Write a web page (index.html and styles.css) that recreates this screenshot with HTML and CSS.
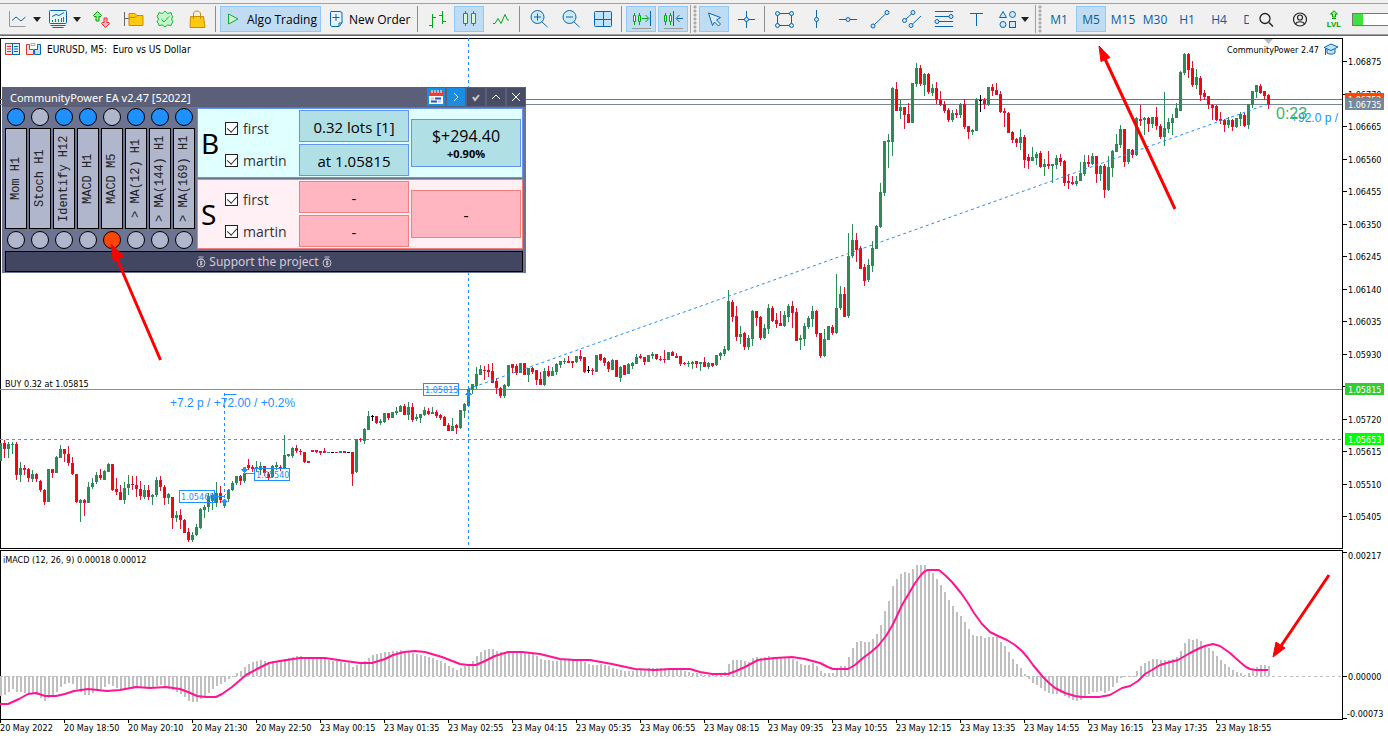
FILE: index.html
```html
<!DOCTYPE html>
<html lang="en">
<head>
<meta charset="utf-8">
<meta name="viewport" content="width=device-width, initial-scale=1">
<title>EURUSD, M5</title>
<link rel="stylesheet" href="styles.css">
</head>
<body>
<header class="toolbar">
  <div class="tools">
    <button class="drop" aria-label="Chart type"><svg class="b" width="20" height="24"><path class="gray" d="M1.5 4v15.500h16"/><path d="M4 13.500l4-3.500 5 4 4.500-4"/></svg><i class="caret"></i></button>
    <button class="drop second" aria-label="Indicators"><svg class="b" width="20" height="24"><rect x="1.500" y="3.500" width="17" height="13" rx="1" fill="#e6f4ff"/><path d="M2.500 18.500h15M4.500 20.500h11M4 9.500l4-2 3 1 5-3"/><path class="g" d="M4.500 15v-2M7.500 15v-3M10.500 15v-3M13.500 15v-4M15.500 15v-5"/></svg><i class="caret"></i></button>
    <button class="tool first" aria-label="Depth"><svg width="24" height="24"><path d="M8.500 4.500L12.500 8.500 11 10 10 9v5H7V9l-1 1-1.500-1.500z" fill="#9df29d" stroke="#00a000"/><path d="M16.500 20.500l-4-4L14 15l1 1v-5h3v5l1-1 1.500 1.500z" fill="#ffb3b3" stroke="#dd3333"/></svg></button>
    <button class="tool" aria-label="Files"><svg width="24" height="24"><path d="M3.500 5v14M3.500 11.500H8" fill="none" stroke="#666"/><path d="M8 6.500h6l2 2h6v10H8z" fill="#ffc90e" stroke="#c98e00"/><path d="M8 10.500h6l2-2" fill="none" stroke="#c98e00"/></svg></button>
    <button class="tool" aria-label="Market"><svg width="24" height="24"><path d="M12 4l2.500 2.500L18 5.500l.8 3L20 9.500 18.500 12l1.500 3-1 1-1 2.500-3.500-.5L12 20l-2.500-2L6 18.500 5.200 16 4 15l1.500-3L4 9l1.200-1L6 5.500l3.500 1z" fill="#c4f7c9" stroke="#18b83a"/><path d="M8.500 12.500l2.500 2.500 5-5.500" fill="none" stroke="#18b83a"/></svg></button>
    <button class="tool" aria-label="Shop"><svg width="24" height="24"><path d="M5.500 9.500h13L20 20.500H5z" fill="#ffc90e" stroke="#c98e00"/><path d="M8.500 12V7c0-4 7-4 7 0v5" fill="none" stroke="#c98e00"/></svg></button>
    <span class="sep"></span>
    <button class="wide on algo"><svg width="14" height="24"><path d="M1.500 7L11 12 1.500 17z" fill="#d2f7d8" stroke="#11a836"/></svg>Algo Trading</button>
    <button class="wide order"><svg class="b" width="14" height="24"><path d="M2 4.500h9l2 1V16l-3 3.500H3l-1.500-1v-13z" fill="#e6f4ff"/><path d="M10 19.500V16h3M7 7v7M3.500 10.500h7"/></svg>New Order</button>
    <span class="sep"></span>
    <button class="tool" aria-label="Bars"><svg class="g" width="24" height="24"><path d="M7.500 7v14M4 18.500h3.500M7.500 10.500H11M17.500 4v13M14 8.500h3.500M17.500 14.500H21"/></svg></button>
    <button class="tool on" aria-label="Candles"><svg class="g" width="24" height="24"><path d="M8.500 4v15M16.500 4v15"/><path d="M6.500 6.500h4v10h-4zM14.500 6.500h4v10h-4z" fill="#d8f5d8"/></svg></button>
    <button class="tool" aria-label="Line"><svg class="g" width="24" height="24"><path d="M4 16.500h2l3-5 3 5 4-9 2.500 5.500H20"/></svg></button>
    <span class="sep"></span>
    <button class="tool" aria-label="Zoom in"><svg class="b" width="24" height="24"><circle cx="10.500" cy="10" r="6.500" fill="#cdeaff"/><path d="M7 10h7M10.500 6.500v7M15 15l5.500 5"/></svg></button>
    <button class="tool" aria-label="Zoom out"><svg class="b" width="24" height="24"><circle cx="10.500" cy="10" r="6.500" fill="#cdeaff"/><path d="M7 10h7M15 15l5.500 5"/></svg></button>
    <button class="tool" aria-label="Tile"><svg class="b" width="24" height="24"><rect x="3.500" y="4.500" width="17" height="15" rx="1" fill="#bfe4ff"/><path d="M12.500 4v16M3 12.500h18"/></svg></button>
    <span class="sep"></span>
    <button class="tool on" aria-label="Auto scroll"><svg class="g" width="24" height="24"><path d="M5.500 6v12M10.500 6v12M13 11.500h6M16.500 8l3.500 3.500-3.500 3.500"/><path d="M4.500 8.500h2v6h-2zM9.500 8.500h2v6h-2z" fill="#fff"/><path d="M21.500 4v15" stroke="#0b66b0"/><path class="gray" d="M3 21.500h19"/></svg></button>
    <button class="tool on" aria-label="Chart shift"><svg class="g" width="24" height="24"><path d="M4.500 6v12M9.500 6v12"/><path d="M3.500 8.500h2v6h-2zM8.500 8.500h2v6h-2z" fill="#fff"/><path d="M12.500 4v15M22 11.500h-6M18.500 8L15 11.500l3.500 3.500" stroke="#0b66b0"/><path class="gray" d="M3 21.500h19"/></svg></button>
    <span class="grip"></span>
    <button class="tool on" aria-label="Cursor"><svg class="b" width="24" height="24"><path d="M6.500 6l12 4.500-4 2.500 4 4-2 2-4-4-2 3.500z" fill="#d5ecff"/></svg></button>
    <button class="tool" aria-label="Crosshair"><svg class="b" width="24" height="24"><path d="M4 12.500h17M12.500 4v17"/><circle cx="12.500" cy="12.500" r="2" fill="#cdeaff"/></svg></button>
    <span class="sep"></span>
    <button class="tool" aria-label="Rectangle"><svg class="b" width="24" height="24"><rect x="5.500" y="6.500" width="14" height="12"/><g fill="#cdeaff"><circle cx="5.500" cy="6.500" r="2"/><circle cx="19.500" cy="6.500" r="2"/><circle cx="5.500" cy="18.500" r="2"/><circle cx="19.500" cy="18.500" r="2"/></g></svg></button>
    <button class="tool" aria-label="Vertical line"><svg class="b" width="24" height="24"><path d="M12.500 3v18"/><circle cx="12.500" cy="12.500" r="2" fill="#cdeaff"/></svg></button>
    <button class="tool" aria-label="Horizontal line"><svg class="b" width="24" height="24"><path d="M3 12.500h18"/><circle cx="12" cy="12.500" r="2" fill="#cdeaff"/></svg></button>
    <button class="tool" aria-label="Trendline"><svg class="b" width="24" height="24"><path d="M5 19L19 5.500"/><g fill="#cdeaff"><circle cx="5" cy="19" r="2"/><circle cx="19" cy="5.500" r="2"/></g></svg></button>
    <button class="tool" aria-label="Channel"><svg class="b" width="24" height="24"><path d="M4 14l9-8.500M10 19.500L21 9"/><g fill="#cdeaff"><circle cx="4.500" cy="13.500" r="2"/><circle cx="13" cy="5.500" r="2"/><circle cx="11" cy="18.500" r="2"/></g></svg></button>
    <button class="tool" aria-label="Fibonacci"><svg class="b" width="24" height="24"><path d="M3 4.500h18M3 9.500h18M3 14.500h18M3 19.500h18"/><g fill="#cdeaff"><circle cx="19" cy="9.500" r="2"/><circle cx="5" cy="14.500" r="2"/></g></svg></button>
    <button class="tool" aria-label="Text"><svg class="b" width="24" height="24"><path d="M6 6.500h13M12.500 6.500V19"/></svg></button>
    <button class="drop shapes" aria-label="Shapes"><svg class="b" width="24" height="24"><g fill="#cdeaff"><path d="M7 4.500l3.500 6h-7z"/><circle cx="16.500" cy="7.500" r="3"/><circle cx="7" cy="17.500" r="3"/><rect x="13.500" y="14.500" width="6" height="6"/></g></svg><i class="caret"></i></button>
    <span class="grip"></span>
    <button class="tool tf">M1</button>
    <button class="tool tf on">M5</button>
    <button class="tool tf">M15</button>
    <button class="tool tf">M30</button>
    <button class="tool tf">H1</button>
    <button class="tool tf">H4</button>
    <button class="tool tf">D1</button>
  </div>
  <div class="status">
    <button class="tool" aria-label="Search"><svg width="24" height="24" fill="none" stroke="#222" stroke-width="1.300"><circle cx="11" cy="11.500" r="5"/><path d="M15 15.500l4 4"/></svg></button>
    <button class="tool" aria-label="Account"><svg width="24" height="24" fill="none" stroke="#222" stroke-width="1.200"><circle cx="12" cy="12.500" r="6.500"/><circle cx="12" cy="10.500" r="2.500"/><path d="M7.500 17c1-3 8-3 9 0"/></svg></button>
    <button class="tool lvl"><svg width="12" height="10"><path d="M6 .8L9.500 4H7.500v3h-3V4h-2z" fill="#9df29d" stroke="#00a000"/><path d="M4 8.500h4" stroke="#00a000"/></svg>LVL</button>
    <span class="meter"></span>
  </div>
</header>

<main class="terminal">
  <section class="pane">
    <svg class="plot" id="price" aria-label="EURUSD price chart">
      <g transform="translate(0,-38)">
        <line class="ask" x1="0" x2="100%" y1="99.500" y2="99.500"/>
        <line class="bid" x1="0" x2="100%" y1="104.500" y2="104.500"/>
        <line class="open" x1="0" x2="100%" y1="389.500" y2="389.500"/>
        <line class="even" x1="0" x2="100%" y1="439.500" y2="439.500"/>
        <g id="candles" shape-rendering="crispEdges"></g>
        <g class="trade">
          <g stroke-dasharray="3 3">
            <path d="M468.500 38v520M224.500 393v106"/>
            <path d="M468 389L1268 104M224 496l20-23"/>
          </g>
          <path d="M224.500 394.500h12M215 496.500h9M244 473.500h10"/>
          <path fill="#1e90ff" d="M224.500 499l3 3h-2v2h-2v-2h-2zM244.500 472.500l3-3h-2v-2h-2v2h-2zM468.500 391.500l3 3h-2v2h-2v-2h-2z"/>
          <rect x="179.500" y="490.500" width="35" height="12"/>
          <rect x="254.500" y="468.500" width="35" height="12"/>
          <rect x="423.500" y="383.500" width="35" height="12"/>
        </g>
        <g class="tag"><text x="181" y="500">1.05460</text><text x="256" y="478">1.05540</text><text x="425" y="393">1.05815</text></g>
        <text class="gain" x="170" y="407">+7.2 p / +72.00 / +0.2%</text>
        <text class="gain" x="1291" y="122">+92.0 p /</text>
        <text class="timer" x="1276" y="119">0:23</text>
        <text class="note" x="5" y="387">BUY 0.32 at 1.05815</text>
        <path d="M1264 39h9l-4.500 5z" fill="#bbb"/>
      </g>
    </svg>
    <h1 class="symbol">
      <svg width="16" height="12"><rect x=".5" y=".5" width="7" height="11" fill="#ffe3e3" stroke="#d33"/><rect x="7.500" y=".5" width="7" height="11" fill="#dff0ff" stroke="#0b66b0"/><path d="M2 3.500h4M2 6h4M2 8.500h4" stroke="#d33"/><path d="M9 3.500h4M9 6h4M9 8.500h4" stroke="#0b66b0"/></svg>
      <svg width="16" height="12"><path d="M.5 1.500h3v5h4v5h-7z" fill="#ffe3e3" stroke="#d33"/><path d="M14.500 1.500h-3v5h-3v5h6z" fill="#bfe4ff" stroke="#0b66b0"/><path d="M5 .5h4v2H5z" fill="none" stroke="#aaa"/></svg>
      <span>EURUSD, M5:&nbsp; Euro vs US Dollar</span>
    </h1>
    <div class="expert">CommunityPower 2.47 <svg width="16" height="13"><path d="M4 6v4c2 1.500 6 1.500 8 0V6M2.500 5.500V12" fill="#bfe4ff" stroke="#0b66b0"/><path d="M8 1l7 3-7 3.500L1 4.500z" fill="#bfe4ff" stroke="#0b66b0"/></svg></div>
  </section>
  <svg class="axis" id="priceAxis"></svg>

  <section class="pane macd">
    <svg class="plot" aria-label="MACD indicator">
      <g transform="translate(0,-550)">
        <line class="zero" x1="0" x2="100%" y1="676.500" y2="676.500"/>
        <g id="bars" shape-rendering="crispEdges"></g>
        <polyline id="signal" class="signal"/>
        <text class="note" x="3" y="563">iMACD (12, 26, 9) 0.00018 0.00012</text>
      </g>
    </svg>
  </section>
  <svg class="axis"><path d="M0 3.500h4M0 127.500h4M0 169.500h4"/><text x="5" y="10">0.00217</text><text x="5" y="131">0.00000</text><text x="4" y="168">-0.00073</text></svg>
  <ol class="times" id="times"></ol>

  <section class="panel" aria-label="CommunityPower EA">
    <header class="panel-head">
      <h2>CommunityPower EA v2.47 [52022]</h2>
      <button class="blue" aria-label="Calendar"><svg class="calendar" width="14" height="15"><path d="M0 2h14v12H0z" fill="#fff"/><path d="M0 2h14v4H0z" fill="#e5403a"/><path d="M3 0v3M6 0v3M9 0v3M12 0v3" stroke="#fff"/><path d="M6 8.500h6M2 11.500h6" stroke="#2a50b8" stroke-width="2"/><path d="M2 8.500h3M9 11.500h3" stroke="#b9c2dd" stroke-width="2"/></svg></button>
      <button class="blue" aria-label="Expand"><svg class="mark" width="12" height="12"><path d="M4 2l4 4-4 4"/></svg></button>
      <button aria-label="Apply"><svg class="mark" width="12" height="12"><path d="M3 6l2 3 4-5" stroke="#ccc" stroke-width="2"/></svg></button>
      <button aria-label="Collapse"><svg class="mark" width="12" height="12"><path d="M2 8l4-4 4 4"/></svg></button>
      <button aria-label="Close"><svg class="mark" width="12" height="12"><path d="M2 2l8 8M10 2l-8 8"/></svg></button>
    </header>
    <div class="panel-body">
      <div class="signals">
        <div class="sig"><i class="dot up"></i><button>Mom H1</button><i class="dot"></i></div>
        <div class="sig"><i class="dot"></i><button>Stoch H1</button><i class="dot"></i></div>
        <div class="sig"><i class="dot up"></i><button>Identify H12</button><i class="dot"></i></div>
        <div class="sig"><i class="dot up"></i><button>MACD H1</button><i class="dot"></i></div>
        <div class="sig"><i class="dot"></i><button>MACD M5</button><i class="dot down"></i></div>
        <div class="sig"><i class="dot up"></i><button>&gt; MA(12) H1</button><i class="dot"></i></div>
        <div class="sig"><i class="dot up"></i><button>&gt; MA(144) H1</button><i class="dot"></i></div>
        <div class="sig"><i class="dot up"></i><button>&gt; MA(169) H1</button><i class="dot"></i></div>
      </div>
      <div class="sides">
        <div class="side buy">
          <b class="letter">B</b>
          <div class="checks"><label><input type="checkbox" checked>first</label><label><input type="checkbox" checked>martin</label></div>
          <div class="pair"><button>0.32 lots [1]</button><button>at 1.05815</button></div>
          <button class="total">$+294.40<small>+0.90%</small></button>
        </div>
        <div class="side sell">
          <b class="letter">S</b>
          <div class="checks"><label><input type="checkbox" checked>first</label><label><input type="checkbox" checked>martin</label></div>
          <div class="pair"><button>-</button><button>-</button></div>
          <button class="total">-</button>
        </div>
      </div>
    </div>
    <button class="support"><svg width="10" height="12"><circle cx="5" cy="7" r="4"/><path d="M2.500 1h5M3 3h4M6.500 5.500h-2v1.500h1.500v1.500h-2M5 4.500v5"/></svg>Support the project<svg width="10" height="12"><circle cx="5" cy="7" r="4"/><path d="M2.500 1h5M3 3h4M6.500 5.500h-2v1.500h1.500v1.500h-2M5 4.500v5"/></svg></button>
  </section>

  <svg class="arrows" aria-hidden="true">
    <g transform="translate(0,-38)">
      <path d="M160.500 360L117 259M1175 209L1105 59M1329 575L1281 646"/>
      <path class="head" d="M111 244l12.500 12-10 5zM1099 46l11 11.500-9 4zM1273 657l3-15 9 6z"/>
    </g>
  </svg>
</main>
<script src="chart.js"></script>
</body>
</html>
```

FILE: styles.css
```css
* { box-sizing: border-box; }
body {
  margin: 0;
  min-height: 100vh;
  display: flex;
  flex-direction: column;
  background: #fff;
  color: #000;
  font: 12px "Open Sans", "Noto Sans", sans-serif;
  overflow-x: hidden;
}
button {
  margin: 0;
  padding: 0;
  border: 1px solid transparent;
  background: none;
  color: inherit;
  font: inherit;
}
svg { display: block; flex: none; }

/* toolbar */
.toolbar {
  display: flex;
  height: 36px;
  padding-top: 3px;
  background: #f0f0f0;
  border-bottom: 1px solid #696969;
  box-shadow: inset 0 3px #f0f0f0, inset 0 4px #a0a0a0, inset 0 -1px #a0a0a0;
}
.tools {
  flex: 1;
  min-width: 0;
  display: flex;
  align-items: center;
  gap: 2px;
  padding-left: 8px;
  overflow: hidden;
}
.tools > * { flex: none; }
.tool {
  width: 30px;
  height: 26px;
  display: flex;
  align-items: center;
  justify-content: center;
}
.tool.first { margin-left: 3px; }
.on { background: #c0dcf3; border-color: #90c8f6; }
.drop { display: flex; align-items: center; gap: 5px; border: 0; }
.drop.second { margin-left: 5px; }
.drop.shapes { width: 40px; gap: 1px; padding-left: 3px; }
.caret { border: 4px solid transparent; border-top: 5px solid #222; border-bottom: 0; }
.sep { width: 1px; height: 26px; margin: 0 2px 0 1px; background: #8c8c8c; }
.grip {
  width: 7px;
  height: 28px;
  border-left: 1px solid #a0a0a0;
  background: radial-gradient(circle, #aaa 1px, transparent 2px) 2px 0 / 4px 4px repeat-y;
}
.wide { height: 26px; display: flex; align-items: center; }
.algo { width: 101px; padding-left: 6px; gap: 6px; }
.order { width: 91px; padding-left: 5px; gap: 6px; }
.b { fill: none; stroke: #0b66b0; }
.g { fill: none; stroke: #00a818; }
.gray { stroke: #999; }
.tf { color: #0b5c9e; }
.status { flex: none; display: flex; align-items: center; gap: 4px; padding-left: 2px; }
.lvl { flex-direction: column; color: #00a000; font: bold 8px "Liberation Sans", sans-serif; }
.meter {
  width: 36px;
  height: 13px;
  margin-left: -1px;
  border: 1px solid #777;
  border-right: 0;
  background: linear-gradient(90deg, #3fe03f 10px, #fff 10px);
}

/* chart window */
.terminal {
  position: relative;
  flex: 1;
  display: grid;
  grid-template-columns: 1fr 45px;
  grid-template-rows: minmax(511px, 1fr) 171px 19px;
  margin-top: 2px;
  overflow: hidden;
  font: 9px "DejaVu Sans Condensed", "DejaVu Sans", sans-serif;
}
.pane { position: relative; min-width: 0; border: 1px solid #000; border-width: 1px 1px 1px 0; box-shadow: inset 1px 0 #000; }
.pane.macd { margin-top: 1px; }
.plot { position: absolute; inset: -1px 0 0; width: 100%; height: calc(100% + 1px); }
.axis { width: 100%; height: 100%; }
.axis path { stroke: #000; }
.ask, .bid, .open, .even, .zero { shape-rendering: crispEdges; }
.ask { stroke: #ff4500; }
.bid { stroke: #778899; }
.open { stroke: #32cd32; }
.even { stroke: #00e600; stroke-dasharray: 3 3; }
.zero { stroke: #c0c0c0; stroke-dasharray: 3 3; }
.trade { fill: none; stroke: #1e90ff; }
.tag { fill: #1e90ff; }
.gain { fill: #1e90ff; font: 12px "Liberation Sans", sans-serif; }
.timer { fill: #3cb371; font: 16px "Liberation Sans", sans-serif; }
.signal { fill: none; stroke: #ff1493; stroke-width: 2; stroke-linejoin: round; }
.symbol {
  position: absolute;
  top: 4px;
  left: 5px;
  margin: 0;
  display: flex;
  align-items: center;
  gap: 5px;
  font: inherit;
  font-size: 10px;
}
.expert { position: absolute; top: 4px; right: 3px; display: flex; align-items: center; gap: 4px; }
.times {
  grid-column: 1 / -1;
  display: flex;
  margin: 0;
  padding: 0;
  list-style: none;
}
.times li { flex: none; width: 64px; white-space: nowrap; line-height: 11px; }
.times li::before { content: ""; display: block; width: 1px; height: 3px; background: #000; }

/* expert panel */
.panel {
  position: absolute;
  top: 49px;
  left: 2px;
  width: 524px;
  padding-bottom: 1px;
  background: #6c7492;
  font: 12px/16px "Open Sans", "Noto Sans", sans-serif;
}
.panel-head {
  display: flex;
  align-items: center;
  gap: 2px;
  height: 20px;
  padding: 0 1px 0 8px;
  background: #5b5f77;
  color: #fff;
}
.panel-head h2 { flex: 1; margin: 0; font: 11px "Noto Sans", sans-serif; }
.panel-head button {
  width: 18px;
  height: 18px;
  display: grid;
  place-items: center;
  border: 0;
  background: #484c66;
}
.panel-head button.blue { background: #1b8de0; }
.mark { fill: none; stroke: #fff; }
.panel-body { display: flex; gap: 2px; padding: 1px 3px 0; }
.signals { display: flex; gap: 2px; }
.sig { display: flex; flex-direction: column; align-items: center; justify-content: space-between; width: 22px; }
.dot { width: 18px; height: 18px; border: 1px solid #000; border-radius: 50%; background: #b0b6cb; }
.dot.up { background: #1e90ff; }
.dot.down { background: #ff4500; }
.sig button {
  width: 22px;
  height: 101px;
  border: 1px solid #000;
  background: #b0b6cb;
  color: #222;
  font: 12px/18px "Liberation Mono", monospace;
  writing-mode: vertical-rl;
  transform: rotate(180deg);
}
.sides { flex: 1; display: flex; flex-direction: column; gap: 1px; }
.side { display: flex; align-items: center; height: 70px; padding: 1px; border: 1px solid #6495ed; background: #e0ffff; font-size: 14px; }
.letter { width: 26px; padding-left: 2px; font: 28px/32px "Noto Sans", sans-serif; }
.checks { flex: 1; display: flex; flex-direction: column; gap: 16px; padding-top: 3px; color: #333; }
.checks label { display: flex; align-items: center; gap: 5px; }
.checks input { appearance: none; position: relative; width: 13px; height: 13px; margin: 0; border: 1px solid #222; background: #fff; }
.checks input:checked::after {
  content: "";
  position: absolute;
  top: 0;
  left: 3px;
  width: 5px;
  height: 8px;
  border: solid #333;
  border-width: 0 1px 1px 0;
  transform: rotate(42deg);
}
.pair { width: 110px; display: grid; gap: 2px; margin-right: 2px; }
.side button { border: 1px solid #6495ed; background: #b0e0e6; height: 32px; font-size: 15px; padding-top: 2px; }
.side .total { width: 110px; height: 48px; font-size: 16px; line-height: 19px; }
.total small { display: block; font: bold 11px/15px "Open Sans", sans-serif; }
.side.sell { border-color: #f08080; background: #fff0f5; }
.side.sell button { border-color: #f08080; background: #ffb6c1; }
.support {
  display: flex;
  align-items: center;
  justify-content: center;
  gap: 3px;
  width: 518px;
  height: 21px;
  margin: 2px 3px 0;
  border: 1px solid #000;
  background: #434660;
  color: #d3cdda;
  font-family: "Noto Sans", sans-serif;
}
.support svg { fill: none; stroke: #c5bfcc; }

.arrows { position: absolute; inset: 0; width: 100%; height: 100%; pointer-events: none; }
.arrows path { fill: none; stroke: #f00; stroke-width: 3; }
.arrows .head { fill: #f00; stroke-width: 1; }
```

FILE: chart.js
```js
const STEP = 4;
const svg = (name, attrs, parent, text) => {
  const el = document.createElementNS("http://www.w3.org/2000/svg", name);
  for (const k in attrs) el.setAttribute(k, attrs[k]);
  if (text) el.textContent = text;
  parent.appendChild(el);
  return el;
};

// direction (g up, r down, k flat), then high, body top, body bottom, low
const candles = `g443 443 461 461,r440 443 449 458,g442 444 449 458,g442 444 445 454,r442 444 475 480,g462 468 475 482,r465 468 470 475,r468 469 478 482,g470 474 479 482,r473 474 479 482,
r480 481 490 492,r489 490 502 505,g469 469 502 502,r469 469 473 478,g456 457 473 473,g445 449 458 458,r449 449 454 462,r446 454 463 466,r457 463 474 475,r474 474 502 503,
g499 500 503 522,r499 500 503 516,g482 487 503 503,g478 483 487 489,g472 475 482 484,r469 475 478 480,g470 471 480 480,g463 464 472 472,r464 464 490 491,r478 489 492 495,
r485 492 500 500,g482 488 500 504,g475 484 488 495,r476 484 485 490,r476 485 489 497,r481 489 496 500,g485 490 497 499,r485 490 497 500,g494 495 497 505,g477 480 495 497,
r476 480 487 491,r485 487 498 505,g493 494 498 504,r497 497 518 529,g511 515 518 522,r509 515 520 529,r519 520 533 533,r528 532 540 542,g532 535 540 542,g524 527 535 536,
g508 509 528 529,g505 507 510 518,g493 496 507 512,g493 495 501 510,g482 493 503 507,r486 493 500 503,g499 502 506 508,g489 490 499 502,g481 483 490 491,g476 476 483 485,
r475 476 481 485,g471 473 481 483,r459 465 468 470,r465 467 469 472,g461 467 469 472,g462 466 470 475,r466 466 473 476,r472 474 478 480,g465 466 477 478,g462 465 467 470,
r465 467 469 471,g435 455 469 469,g454 454 456 457,g447 448 456 458,r445 448 451 453,r449 451 452 455,r452 452 462 463,r461 461 463 463,r450 450 452 452,r450 450 452 453,
r451 451 453 455,r448 451 453 453,g452 452 453 453,k452 452 453 453,r452 452 453 453,g451 451 453 453,r451 451 453 453,k452 452 453 453,r452 452 474 486,g439 439 472 473,
r438 439 440 442,g428 429 441 444,g411 416 430 430,k415 416 417 421,r416 416 423 424,g419 421 423 425,g413 413 422 423,r413 413 418 420,g412 412 418 418,g407 411 413 415,
g405 406 412 412,r404 406 415 415,g402 407 415 420,r403 407 420 422,g414 417 419 421,g414 414 418 423,g407 410 415 416,r408 411 414 415,g407 412 414 414,r410 412 416 418,
r414 415 418 420,r416 417 426 426,r423 425 431 431,g418 426 431 431,r424 425 428 434,g410 410 428 429,g403 404 411 418,g389 389 406 406,g384 384 390 394,g367 374 386 389,
g365 369 375 375,r366 370 371 380,r364 370 372 377,r363 371 383 383,r378 381 388 394,r387 388 396 398,g384 385 396 398,g365 365 386 387,r364 364 368 373,r364 366 373 375,
g363 363 373 373,r363 363 375 375,g368 368 375 382,r367 368 372 374,r370 370 380 385,r372 379 385 385,g368 371 385 386,r366 371 376 377,g367 371 376 376,g363 364 372 375,
g361 361 365 368,g358 361 362 364,r356 361 363 363,r361 361 363 368,g356 356 362 363,r350 356 359 361,r357 357 372 373,k366 370 371 373,r368 370 371 375,g355 355 372 372,
r354 354 360 361,r357 358 363 366,r361 362 369 372,g359 360 370 370,r360 360 377 377,g366 367 378 382,r365 365 375 375,g363 364 374 374,g362 363 366 369,g354 357 364 364,
r354 356 358 359,r357 357 362 365,g355 355 362 362,g352 354 356 359,r354 354 359 360,r356 359 360 361,r350 359 360 363,g352 352 360 360,r351 352 356 356,r353 356 358 358,
r356 356 364 366,r362 363 364 365,g361 363 364 367,g361 362 364 369,r361 361 364 368,g362 362 364 371,r357 362 367 367,g362 363 367 369,r363 363 366 367,g355 355 365 366,
g352 353 356 360,g346 349 354 356,g290 301 350 351,r300 302 317 322,r306 316 337 341,g326 334 337 344,r332 333 347 350,g335 338 347 350,g310 311 339 346,r311 311 318 326,
r316 317 338 340,g324 328 338 339,g304 308 329 334,r306 308 321 322,r313 320 324 328,r311 323 326 326,g311 315 326 327,g304 306 317 322,r301 306 313 328,r308 312 341 341,
g335 338 340 350,g323 326 339 346,g316 318 327 329,g306 311 319 327,r310 311 334 337,r333 333 356 358,g329 339 356 357,g326 326 340 340,r325 327 333 335,g274 308 333 334,
g286 294 308 310,r287 294 317 317,g233 256 316 318,g224 240 256 258,r233 240 250 262,r246 248 269 269,r264 267 281 286,g259 265 280 282,g241 248 266 272,g225 226 249 249,
g183 192 227 228,g141 141 193 196,g134 140 142 168,g87 88 142 156,r82 89 111 111,g99 107 111 119,r107 107 115 129,r103 114 123 123,g83 83 123 123,g63 68 84 87,
r65 68 84 86,g73 74 85 96,r73 74 92 94,g84 88 93 96,r82 88 100 104,r91 100 105 106,r101 104 111 113,r108 110 120 122,g110 113 120 122,r109 113 115 118,
g103 104 115 118,r99 104 127 129,r126 126 132 139,g129 130 132 135,g98 99 131 131,k95 100 101 112,r98 100 104 109,g87 87 105 106,r84 87 91 96,r83 90 95 95,
r91 94 112 113,r108 111 113 127,r112 113 133 133,r131 132 140 143,r138 139 143 147,g129 137 143 150,r135 137 160 168,r154 157 161 169,g147 157 161 161,g152 154 158 165,
r151 153 167 168,g159 164 167 176,r151 164 166 169,g164 164 166 183,g155 158 165 169,r154 158 162 166,r160 161 183 186,r174 181 183 189,r176 182 184 185,g176 181 184 186,
g162 173 181 181,g155 162 174 176,r155 162 164 167,g153 156 164 165,r156 156 174 183,g165 166 174 181,r164 166 190 198,g156 167 190 191,g150 151 168 177,g134 144 152 152,
g125 129 145 148,r129 129 162 167,g149 149 162 164,r149 150 155 158,g117 118 155 156,r105 119 121 126,g117 118 120 135,r117 118 124 132,g117 117 124 128,r107 117 126 130,
r124 126 137 139,g92 128 137 146,g118 122 129 133,g114 118 123 135,g103 108 118 118,g71 72 111 111,g53 54 73 75,r53 54 70 78,r61 68 85 87,g69 77 85 89,
r76 78 95 101,r90 93 97 100,r96 96 105 109,r104 105 108 120,r105 106 120 121,r112 119 121 124,r119 120 125 132,g117 120 125 128,r119 120 127 131,g118 118 127 128,
g112 114 119 126,r113 115 126 127,g104 104 125 129,g91 91 105 108,g85 85 92 98,r84 86 93 94,r91 91 96 100,r94 95 105 109`.replace(/\n/g, "").split(",");

const tint = { g: "#2e8b57", r: "#dc143c", k: "#000" };
const candleLayer = document.getElementById("candles");
candles.forEach((c, i) => {
  const [high, top, bottom, low] = c.slice(1).split(" ").map(Number);
  const x = i * STEP, fill = tint[c[0]];
  svg("rect", { x, y: high, width: 1, height: Math.max(1, low - high), fill }, candleLayer);
  svg("rect", { x: x - 1, y: top, width: 3, height: bottom - top, fill }, candleLayer);
  if (c[0] === "r" && bottom - top > 2) {
    svg("rect", { x, y: top + 1, width: 2, height: bottom - top - 2, fill: "#ff0000" }, candleLayer);
  }
});

// histogram knots: bar index, level; bars between knots are interpolated
const knots = [[0,696],[1,695],[2,692],[3,689],[4,692],[5,692],[6,693],[8,693],[9,695],[10,698],[11,701],[12,698],[13,695],[14,692],[15,687],[16,684],[17,683],[18,684],[19,689],[20,692],[21,695],[22,695],[23,693],[24,690],[26,687],[27,684],[28,686],[30,689],[36,688],[40,685],[41,687],[43,690],[44,692],[45,694],[46,697],[47,701],[48,702],[49,702],[50,699],[51,696],[52,693],[53,689],[54,686],[55,684],[56,682],[57,679],[58,677],[59,673],[60,671],[61,667],[62,664],[63,662],[65,660],[67,662],[70,660],[72,658],[74,656],[75,656],[76,657],[80,658],[82,660],[84,661],[86,663],[87,663],[88,667],[89,665],[90,663],[91,661],[92,658],[93,655],[94,654],[96,652],[98,651],[100,650],[102,651],[103,653],[106,656],[108,658],[110,661],[111,663],[112,666],[114,670],[115,668],[117,664],[118,661],[119,656],[120,652],[121,650],[122,649],[123,649],[124,651],[126,653],[130,652],[133,654],[134,656],[135,659],[138,661],[140,660],[144,660],[146,662],[148,665],[150,664],[152,666],[154,669],[156,671],[158,671],[160,669],[162,668],[165,668],[170,670],[172,672],[175,674],[176,675],[180,675],[181,672],[182,664],[183,660],[185,660],[187,662],[188,658],[189,657],[190,658],[192,656],[194,657],[197,658],[198,659],[199,661],[200,664],[202,665],[203,663],[204,666],[205,671],[206,673],[208,673],[209,670],[210,666],[211,666],[212,657],[213,648],[214,642],[215,641],[217,642],[218,639],[219,634],[220,625],[221,611],[222,601],[223,586],[224,579],[225,574],[226,572],[227,573],[228,569],[229,565],[231,565],[232,569],[233,573],[234,579],[235,585],[236,592],[237,600],[238,606],[239,612],[240,616],[241,622],[242,629],[243,635],[245,636],[246,638],[247,637],[249,637],[250,642],[251,646],[252,652],[253,659],[254,664],[255,668],[256,674],[257,679],[258,683],[259,685],[260,688],[261,691],[263,694],[265,693],[267,698],[268,700],[269,701],[270,700],[271,697],[272,694],[273,692],[275,691],[276,693],[277,691],[278,687],[279,683],[280,678],[283,676],[284,671],[285,666],[286,663],[287,661],[288,659],[292,660],[294,657],[295,651],[296,643],[297,639],[298,640],[299,639],[300,641],[301,645],[302,648],[303,651],[304,656],[305,660],[306,664],[307,667],[308,670],[309,672],[310,673],[311,675],[312,673],[313,669],[314,667],[315,665],[316,665],[317,666]];
const barLayer = document.getElementById("bars");
let n = 0;
for (let i = 0; i < candles.length; i++) {
  while (n < knots.length - 2 && knots[n + 1][0] <= i) n++;
  const [a, ya] = knots[n], [b, yb] = knots[n + 1];
  const y = Math.round(ya + (yb - ya) * (i - a) / (b - a));
  svg("rect", { x: i * STEP, y: Math.min(y, 676), width: 2, height: Math.max(1, Math.abs(676 - y)), fill: "#c0c0c0" }, barLayer);
}

document.getElementById("signal").setAttribute("points", "0,704 8,704 19,699 28,694 36,693 45,696 56,696 65,694 74,691 88,689 107,691 120,690 136,687 150,688 166,687 180,689 188,692 197,696 206,697 216,697 222,694 232,687 239,681 246,675 257,669 263,666 269,663 280,661 300,658 325,658 345,661 360,663 372,663 385,659 393,655 404,652 415,651 425,652 442,657 460,664 468,665 476,665 485,661 495,656 508,652 522,652 540,654 560,659 575,660 590,660 612,664 635,669 655,670 670,669 690,669 700,672 712,674 728,674 736,671 745,667 758,660 775,658 792,657 805,659 820,663 828,667 833,669 848,669 855,665 863,658 871,652 878,646 886,636 892,626 896,618 902,605 908,595 915,583 921,575 925,571 928,570 939,570 946,576 952,582 961,593 968,603 974,613 982,624 990,632 998,636 1007,640 1015,645 1022,651 1028,658 1033,665 1043,677 1049,683 1055,688 1065,693 1075,696 1082,697 1099,697 1110,695 1122,688 1130,686 1138,681 1145,674 1152,670 1160,665 1170,662 1178,660 1190,653 1200,648 1205,646 1213,644 1220,646 1230,653 1240,662 1246,667 1250,669 1256,670 1268,670");

const axis = document.getElementById("priceAxis");
for (let i = 0; i < 15; i++) {
  const y = Math.round(23 + i * 32.5);
  svg("path", { d: `M0 ${y + 0.5}h4` }, axis);
  svg("text", { x: 5, y: y + 4 }, axis, (1.06875 - i * 0.00105).toFixed(5));
}
[["1.06752", 55, "#ff4500"], ["1.06735", 60, "#778899"], ["1.05815", 345, "#32cd32"], ["1.05653", 395, "#00ff00"]].forEach(([t, y, fill]) => {
  svg("rect", { x: 2, y, width: 39, height: 12, fill }, axis);
  svg("text", { x: 5, y: y + 10, fill: "#fff" }, axis, t);
});

const times = document.getElementById("times");
["20 May 2022", "20 May 18:50", "20 May 20:10", "20 May 21:30", "20 May 22:50", "23 May 00:15", "23 May 01:35", "23 May 02:55", "23 May 04:15", "23 May 05:35", "23 May 06:55", "23 May 08:15", "23 May 09:35", "23 May 10:55", "23 May 12:15", "23 May 13:35", "23 May 14:55", "23 May 16:15", "23 May 17:35", "23 May 18:55"].forEach(t => {
  const li = document.createElement("li");
  li.textContent = t;
  times.appendChild(li);
});
```
